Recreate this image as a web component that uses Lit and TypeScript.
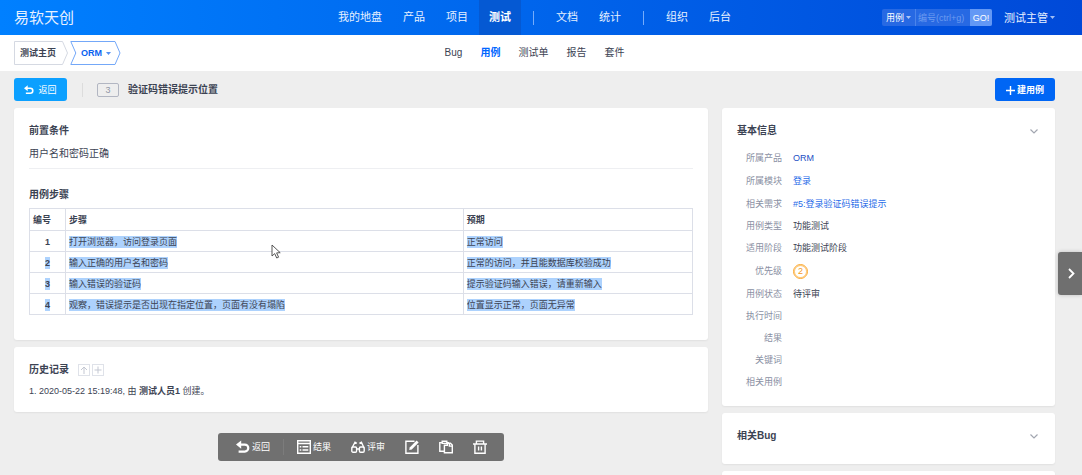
import { LitElement, html, css, svg, nothing } from "lit";
import { customElement } from "lit/decorators.js";
import { classMap } from "lit/directives/class-map.js";

const icon = (body: unknown, cls = "icon") =>
  html`<svg class=${cls} viewBox="0 0 14 14" aria-hidden="true">${body}</svg>`;

const backIcon = (cls = "icon") =>
  icon(
    svg`<path d="M3 4.6h5.8a3.5 3.5 0 0 1 0 7H2.6" fill="none" stroke="currentColor" stroke-width="2.2"/>
      <path d="M0 4.6 5.2 .4v8.4z" fill="currentColor"/>`,
    cls,
  );

const resultIcon = icon(svg`
  <path d="M.7.7h12.6v12.6H.7z" fill="none" stroke="currentColor" stroke-width="1.4"/>
  <path d="M.7 3.5h12.6M5.5 6.8h5.8M5.5 10h5.8M2.7 6.8h1.6M2.7 10h1.6" stroke="currentColor" stroke-width="1.4" fill="none"/>`);

const glassesIcon = icon(svg`
  <g fill="none" stroke="currentColor" stroke-width="1.4">
    <rect x=".8" y="7" width="4.8" height="5.2" rx="1.2"/>
    <rect x="8.4" y="7" width="4.8" height="5.2" rx="1.2"/>
    <path d="M5.6 9h2.8M.9 8 4 2.2l1.8 1.2M13.1 8 10.4 2.2 8.4 3.4"/>
  </g>`);

const editIcon = icon(svg`
  <path d="M9.5 1.2H.9v12h12V5" fill="none" stroke="currentColor" stroke-width="1.4"/>
  <path d="m4.2 10 .5-2.6L11.6.5l2 2-6.8 6.9z" fill="currentColor"/>`);

const copyIcon = icon(svg`
  <g fill="none" stroke="currentColor" stroke-width="1.4">
    <path d="M5 11.2H.8V2.6h2.6M8 2.6h1.2v1.2M3.2 1.2h4.6v2.2H3.2z"/>
    <path d="M5.4 5.2h3v-2h3l1.9 1.9v7.7H5.4z"/>
    <path d="M10.4 3.2v2.9h2.9"/>
  </g>`);

const trashIcon = icon(svg`
  <g fill="none" stroke="currentColor" stroke-width="1.4">
    <path d="M0 4h14M3.4 4V1.1h7.2V4M1.9 4v9.2h10.2V4M5.6 6.6v4M8.4 6.6v4"/>
  </g>`);

const plusIcon = icon(svg`<path d="M7 0v14M0 7h14" stroke="currentColor" stroke-width="2.2"/>`, "icon-plus");

const caret = html`<svg class="caret" viewBox="0 0 5 3" aria-hidden="true"><path d="M0 0h5L2.5 3z" fill="currentColor"/></svg>`;

const chevron = html`<svg class="chevron" viewBox="0 0 8 5" aria-hidden="true">
  <path d="M.5.5 4 4 7.5.5" fill="none" stroke="currentColor" stroke-width="1.2"/></svg>`;

interface Step {
  step: string;
  expect: string;
  idSelected: boolean;
}

const STEPS: Step[] = [
  { step: "打开浏览器，访问登录页面", expect: "正常访问", idSelected: false },
  { step: "输入正确的用户名和密码", expect: "正常的访问，并且能数据库校验成功", idSelected: true },
  { step: "输入错误的验证码", expect: "提示验证码输入错误，请重新输入", idSelected: true },
  { step: "观察，错误提示是否出现在指定位置，页面有没有塌陷", expect: "位置显示正常，页面无异常", idSelected: true },
];

const FACTS: { label: string; value?: string; kind?: "product" | "link" | "pri" }[] = [
  { label: "所属产品", value: "ORM", kind: "product" },
  { label: "所属模块", value: "登录", kind: "link" },
  { label: "相关需求", value: "#5:登录验证码错误提示", kind: "link" },
  { label: "用例类型", value: "功能测试" },
  { label: "适用阶段", value: "功能测试阶段" },
  { label: "优先级", value: "2", kind: "pri" },
  { label: "用例状态", value: "待评审" },
  { label: "执行时间" },
  { label: "结果" },
  { label: "关键词" },
  { label: "相关用例" },
];

const MAIN_NAV = [["我的地盘", "产品", "项目", "测试"], ["文档", "统计"], ["组织", "后台"]];
const SUB_NAV = ["Bug", "用例", "测试单", "报告", "套件"];

@customElement("app-root")
export class AppRoot extends LitElement {
  static styles = css`
    :host {
      display: block;
      position: relative;
      height: 100vh;
      overflow: hidden;
      background: #eeeeee;
      color: #3c4353;
      font: 9px/16px "Liberation Sans", "Noto Sans CJK SC", sans-serif;
    }
    * { box-sizing: border-box; }
    a { color: inherit; text-decoration: none; }
    button, input, select { font: inherit; color: inherit; border: 0; margin: 0; padding: 0; background: none; border-radius: 0; outline: 0; }
    h1, h2, p, dl, dd, ol { margin: 0; padding: 0; }
    svg { display: block; flex: none; }

    .header, .subheader {
      display: grid;
      grid-template-columns: 1fr auto 1fr;
      align-items: center;
      padding: 0 27px 0 14px;
    }
    .header {
      height: 35px;
      color: #e6f0ff;
      background: linear-gradient(90deg, #0080ff, #0049d8);
    }
    .brand { font-size: 15px; line-height: 35px; }
    .nav { display: flex; align-items: center; height: 35px; font-size: 11px; gap: 1px; }
    .nav a { padding: 0 10px; line-height: 35px; height: 35px; white-space: nowrap; }
    .nav .active { background: #0559d3; color: #fff; font-weight: bold; }
    .nav .split { width: 1px; height: 14px; margin: 0 11px; background: #75acfb; }
    .tools { display: flex; justify-content: flex-end; align-items: center; height: 33px; }
    .search { display: flex; height: 17px; margin-right: 12px; border-radius: 2px; overflow: hidden; background: #2769e3; }
    .search label { display: grid; align-items: center; border-right: 1px solid #4a84ea; width: 34px; }
    .search label > * { grid-area: 1 / 1; }
    .search select { appearance: none; width: 33px; height: 17px; padding-left: 4px; color: #fff; }
    .search option { color: #3c4353; }
    .search .caret { justify-self: end; margin-right: 4px; pointer-events: none; }
    .search input { width: 54px; padding: 0 2px; }
    .search input::placeholder { color: #6c9bf0; opacity: 1; }
    .search button { width: 22px; background: #6398f5; color: #fff; }
    .caret { width: 5px; height: 3px; opacity: 0.7; }
    .user { display: flex; align-items: center; gap: 2px; font-size: 11px; }

    .subheader { height: 36px; background: #fff; }
    .crumbs { display: flex; gap: 2px; font-weight: bold; }
    .crumb { display: grid; align-items: center; height: 24px; }
    .crumb > * { grid-area: 1 / 1; }
    .crumb svg.frame { height: 24px; width: auto; color: #d5d9e2; }
    .crumb .text { display: flex; align-items: center; gap: 4px; padding-left: 6px; }
    .crumb.current { color: #0a62f0; }
    .crumb.current svg.frame { color: #74a8f8; }
    .crumb.current .text { padding-left: 11px; }
    .tabs { display: flex; gap: 18px; font-size: 10px; }
    .tabs .active { color: #0066ff; font-weight: bold; }

    .toolbar { display: flex; align-items: center; height: 37px; padding: 0 27px 0 14px; }
    .btn { display: flex; align-items: center; justify-content: center; gap: 4px; height: 23px; padding-top: 1px; border-radius: 3px; color: #fff; }
    .btn.back { width: 53px; background: #0ca0ff; }
    .btn.create { width: 60px; margin-left: auto; gap: 2px; background: #0066f5; font-weight: bold; }
    .icon-small { width: 10px; height: 10px; }
    .icon-plus { width: 9px; height: 9px; }
    .toolbar .rule { width: 1px; height: 14px; margin: 0 14px 0 15px; background: #dcdcdc; }
    .case-id { width: 22px; height: 14px; border: 1px solid #b2b6c2; border-radius: 2px; line-height: 12px; text-align: center; color: #9197a6; }
    .title { margin-left: 9px; padding-top: 1px; font-size: 10px; }

    .content { display: grid; grid-template-columns: minmax(0, 1fr) 333px; gap: 14px; padding: 0 27px 0 14px; align-items: start; }
    .column { display: grid; gap: 7px; }
    .card { background: #fff; border-radius: 3px; padding: 15px 15px 13px; box-shadow: 0 1px 2px rgba(0, 0, 0, 0.06); }
    .card h2 { font-size: 10px; line-height: 16px; }
    .case { padding-bottom: 25px; }
    .precondition { font-size: 10px; padding: 7px 0 6px; margin-bottom: 18px; border-bottom: 1px solid #eeeff2; }

    .steps { width: 100%; margin-top: 5px; border-collapse: collapse; table-layout: fixed; }
    .steps th, .steps td { border: 1px solid #dcdfe8; height: 21px; padding: 1px 3px 0; line-height: 16px; text-align: left; }
    .steps thead th { height: 22px; }
    .steps .no-head { width: 36px; }
    .steps .step-head { width: 60%; }
    .steps .no { text-align: center; }
    .sel { background: #add2fd; padding: 1px 0; }

    .history-head { display: flex; align-items: center; gap: 2px; }
    .history-head h2 { margin-right: 7px; }
    .mini { width: 12px; height: 12px; border: 1px solid #dfe2e9; color: #c3c7d2; display: grid; place-items: center; }
    .mini svg { width: 8px; height: 8px; }
    .history ol { margin-top: 5px; list-style: none; }

    .actions { display: flex; align-items: center; justify-self: center; gap: 20px; height: 28px; margin-top: 14px; padding: 0 17px 0 18px; border-radius: 3px; background: #707070; color: #fff; }
    .actions button { display: flex; align-items: center; gap: 2px; }
    .actions .first { padding-right: 13px; margin-right: -7px; border-right: 1px solid #7c7c7c; }
    .icon { width: 14px; height: 14px; }

    .side-head { display: flex; align-items: center; justify-content: space-between; width: 100%; text-align: left; padding-right: 2px; }
    .chevron { width: 8px; height: 5px; color: #a2a6b0; }
    .facts { margin-top: 7px; }
    .fact { display: flex; align-items: center; gap: 11px; height: 22px; }
    .fact dt { width: 45px; text-align: right; color: #8a90a3; white-space: nowrap; }
    .fact.product, .fact.link { height: 23px; }
    .fact.pri { height: 24px; }
    .fact.product a { color: #1c4fc4; }
    .fact.link a { color: #1f6be8; }
    .pri-badge { display: block; width: 15px; height: 15px; border: 1px solid #fca72d; box-shadow: inset 0 0 0 1px #fdc878; border-radius: 50%; line-height: 13px; text-align: center; color: #f59a1b; }
    .closed { height: 51px; }
    .next { position: absolute; top: 252px; right: 0; width: 24px; height: 43px; display: grid; place-items: center; padding-left: 3px; border-radius: 3px 0 0 3px; background: #6f6f6f; color: #fff; box-shadow: 0 0 4px rgba(0, 0, 0, 0.2); }
    .next svg { width: 7px; height: 11px; }
    .pointer { position: absolute; left: 271px; top: 244px; width: 10px; height: 15px; }
  `;

  private renderValue(fact: (typeof FACTS)[number]) {
    if (!fact.value) return nothing;
    if (fact.kind === "pri") return html`<span class="pri-badge">${fact.value}</span>`;
    if (fact.kind) return html`<a href="#">${fact.value}</a>`;
    return fact.value;
  }

  render() {
    return html`
      <header class="header">
        <div class="brand">易软天创</div>
        <nav class="nav">
          ${MAIN_NAV.map(
            (group, i) => html`${i ? html`<span class="split"></span>` : nothing}${group.map(
              (name) => html`<a href="#" class=${classMap({ active: name === "测试" })}>${name}</a>`,
            )}`,
          )}
        </nav>
        <div class="tools">
          <form class="search" @submit=${(e: Event) => e.preventDefault()}>
            <label>
              <select aria-label="搜索类型"><option>用例</option></select>
              ${caret}
            </label>
            <input type="text" aria-label="编号" placeholder="编号(ctrl+g)" />
            <button type="submit">GO!</button>
          </form>
          <a href="#" class="user">测试主管${caret}</a>
        </div>
      </header>

      <div class="subheader">
        <div class="crumbs">
          <a href="#" class="crumb">
            <svg class="frame" viewBox="0 0 54 24" aria-hidden="true"><path d="M.5.5h48l5 11.5-5 11.5H.5z" fill="none" stroke="currentColor"/></svg>
            <span class="text">测试主页</span>
          </a>
          <a href="#" class="crumb current">
            <svg class="frame" viewBox="0 0 51 24" aria-hidden="true"><path d="M.8.5h44.2l5 11.5-5 11.5H.8L5.8 12z" fill="none" stroke="currentColor"/></svg>
            <span class="text">ORM${caret}</span>
          </a>
        </div>
        <nav class="tabs">
          ${SUB_NAV.map((name) => html`<a href="#" class=${classMap({ active: name === "用例" })}>${name}</a>`)}
        </nav>
      </div>

      <div class="toolbar">
        <button class="btn back">${backIcon("icon-small")}返回</button>
        <span class="rule"></span>
        <span class="case-id">3</span>
        <h1 class="title">验证码错误提示位置</h1>
        <button class="btn create">${plusIcon}建用例</button>
      </div>

      <main class="content">
        <div class="column">
          <section class="card case">
            <h2>前置条件</h2>
            <p class="precondition">用户名和密码正确</p>
            <h2>用例步骤</h2>
            <table class="steps">
              <thead>
                <tr><th class="no-head">编号</th><th class="step-head">步骤</th><th>预期</th></tr>
              </thead>
              <tbody>
                ${STEPS.map(
                  (s, i) => html`<tr>
                    <th class="no" scope="row"><span class=${classMap({ sel: s.idSelected })}>${i + 1}</span></th>
                    <td><span class="sel">${s.step}</span></td>
                    <td><span class="sel">${s.expect}</span></td>
                  </tr>`,
                )}
              </tbody>
            </table>
          </section>

          <section class="card history">
            <div class="history-head">
              <h2>历史记录</h2>
              <button class="mini" aria-label="切换顺序">
                <svg viewBox="0 0 8 8"><path d="M4 8V1M1 4l3-3 3 3" fill="none" stroke="currentColor"/></svg>
              </button>
              <button class="mini" aria-label="展开全部">
                <svg viewBox="0 0 8 8"><path d="M4 .5v7M.5 4h7" fill="none" stroke="currentColor"/></svg>
              </button>
            </div>
            <ol><li>1. 2020-05-22 15:19:48, 由 <strong>测试人员1</strong> 创建。</li></ol>
          </section>

          <div class="actions">
            <button class="first">${backIcon()}返回</button>
            <button>${resultIcon}结果</button>
            <button>${glassesIcon}评审</button>
            <button aria-label="编辑">${editIcon}</button>
            <button aria-label="复制">${copyIcon}</button>
            <button aria-label="删除">${trashIcon}</button>
          </div>
        </div>

        <aside class="column">
          <section class="card">
            <h2><button class="side-head">基本信息${chevron}</button></h2>
            <dl class="facts">
              ${FACTS.map(
                (f) => html`<div class="fact ${f.kind ?? ""}"><dt>${f.label}</dt><dd>${this.renderValue(f)}</dd></div>`,
              )}
            </dl>
          </section>
          <section class="card closed">
            <h2><button class="side-head">相关Bug${chevron}</button></h2>
          </section>
          <section class="card closed"></section>
        </aside>
      </main>

      <button class="next" aria-label="下一个">
        <svg viewBox="0 0 7 11"><path d="m1 1 4.5 4.5L1 10" fill="none" stroke="currentColor" stroke-width="1.8"/></svg>
      </button>
      <svg class="pointer" viewBox="0 0 10 15" aria-hidden="true">
        <path d="M1 1v11l2.7-2.4 2 4.4 1.9-.8-2-4.3 3.6-.2z" fill="#fff" stroke="#444" stroke-width=".9"/>
      </svg>
    `;
  }
}
